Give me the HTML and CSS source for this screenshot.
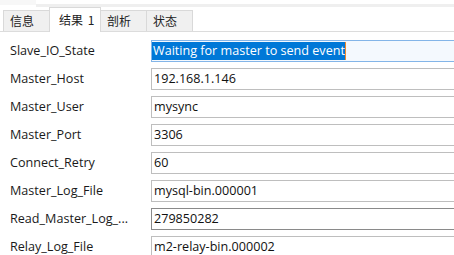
FILE: index.html
```html
<!DOCTYPE html>
<html>
<head>
<meta charset="utf-8">
<link rel="stylesheet" href="styles.css">
</head>
<body>
<div class="topbar"><div class="topbar-left"></div><div class="topbar-line"></div></div>
<div class="tabs">
  <div class="tab">信息</div>
  <div class="tab active">结果 1</div>
  <div class="tab">剖析</div>
  <div class="tab">状态</div>
</div>
<div class="form">
  <div class="label">Slave_IO_State</div>
  <div class="field focus"><span class="sel">Waiting for master to send event</span><span class="caret"></span></div>
  <div class="label">Master_Host</div>
  <div class="field">192.168.1.146</div>
  <div class="label">Master_User</div>
  <div class="field">mysync</div>
  <div class="label">Master_Port</div>
  <div class="field">3306</div>
  <div class="label">Connect_Retry</div>
  <div class="field">60</div>
  <div class="label">Master_Log_File</div>
  <div class="field">mysql-bin.000001</div>
  <div class="label">Read_Master_Log_...</div>
  <div class="field dark">279850282</div>
  <div class="label">Relay_Log_File</div>
  <div class="field">m2-relay-bin.000002</div>
</div>
</body>
</html>
```
FILE: styles.css
```css
html, body {
  margin: 0;
  padding: 0;
  background: #ffffff;
  width: 454px;
  height: 255px;
  overflow: hidden;
  font-family: "Open Sans", "Noto Sans CJK SC", sans-serif;
  color: #1a1a1a;
}
.topbar {
  height: 7px;
  display: flex;
}
.topbar-left {
  width: 36px;
  background: #f7f7f7;
  height: 5px;
}
.topbar-line {
  flex: 1;
  margin-top: 4px;
  height: 3px;
  background: #efefef;
}
.tabs {
  display: flex;
  align-items: flex-end;
  height: 24px;
  padding-left: 3px;
  border-bottom: 1px solid #dcdcdc;
}
.tab {
  box-sizing: border-box;
  height: 21px;
  width: 47px;
  padding-left: 6px;
  background: #f0f0f0;
  border: 1px solid #d9d9d9;
  border-bottom: none;
  margin-left: -1px;
  font-family: "Noto Sans CJK SC", sans-serif;
  font-size: 12px;
  line-height: 20px;
  color: #222;
}
.tab:first-child { margin-left: 0; }
.tab.active {
  height: 25px;
  width: 52px;
  margin-bottom: -1px;
  background: #ffffff;
  padding-left: 9px;
  line-height: 24px;
  word-spacing: 2px;
}
.form {
  display: grid;
  grid-template-columns: 141px 320px;
  grid-auto-rows: 22px;
  row-gap: 6px;
  padding: 8px 0 0 10px;
}
.label {
  font-size: 12.6px;
  line-height: 22px;
  white-space: nowrap;
  color: #1a1a1a;
}
.field {
  box-sizing: border-box;
  height: 22px;
  border: 1px solid #bebebe;
  padding-left: 2px;
  font-size: 12.6px;
  line-height: 20px;
  white-space: nowrap;
  color: #111;
  display: flex;
  align-items: center;
}
.field.focus {
  border-color: #83b5e8;
  background: #f4f9fe;
  padding-left: 0;
  align-items: stretch;
}
.field.focus .sel {
  background: #0078d7;
  color: #ffffff;
  margin: 1px 0 1px 0;
  padding-left: 1px;
  line-height: 18px;
}
.caret {
  width: 1px;
  background: #f08a2c;
  margin: 1px 0;
}
.field.dark {
  border-color: #8a8a8a;
}
```
